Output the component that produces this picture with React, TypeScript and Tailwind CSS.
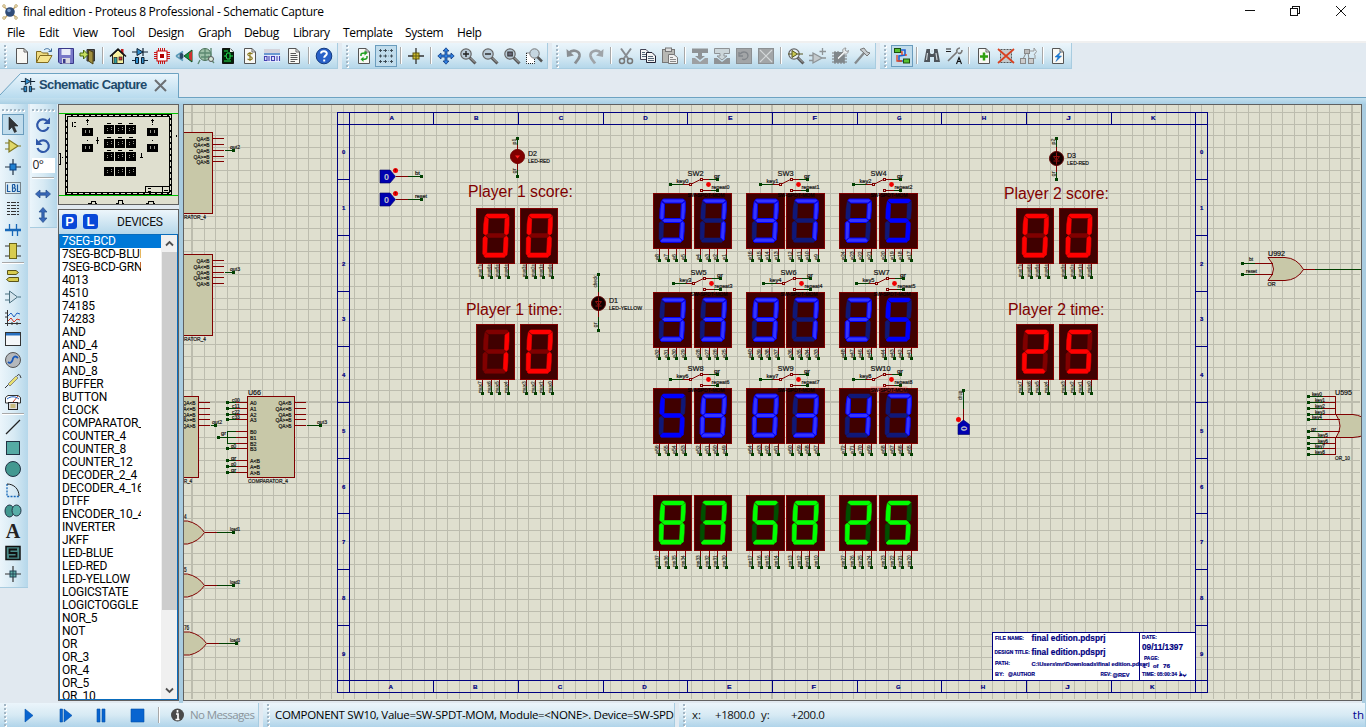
import React from 'react';

type Kids = { children?: React.ReactNode };

/* ---------- icons ---------- */

const Ic = ({ children, active, tall }: Kids & { active?: boolean; tall?: boolean }) => (
  <span
    className={
      (tall ? 'h-[21px] ' : 'h-[22px] ') +
      'flex w-[22px] shrink-0 items-center justify-center ' +
      (active ? 'border border-[#6a9cbd] bg-[#c0dcec]' : '')
    }
  >
    <svg width="18" height="18" viewBox="0 0 18 18" className="shrink-0" fill="none">
      {children}
    </svg>
  </span>
);

const Sheet = ({ children }: Kids) => (
  <>
    <path d="M3.5 1.5H11L14.5 5V16.5H3.5Z" fill="#f8f8f4" stroke="#555" />
    <path d="M11 1.5V5H14.5" stroke="#666" />
    {children}
  </>
);

const Lens = ({ children, light }: Kids & { light?: boolean }) => (
  <>
    <path d="M10.5 10.5L16.5 16.5" stroke="#555" strokeWidth="3" />
    <path d="M11.5 11L16 15.5" stroke="#b4b4b4" strokeWidth="1" />
    <circle cx="7" cy="7" r="5.2" fill={light ? '#e8f0f4' : '#b9cbd8'} stroke="#666" strokeWidth="1.2" />
    {children}
  </>
);

const Parts = () => (
  <>
    <path d="M1 5H17M12 1V9M1 13.500H5M13 13.500H17" stroke="#123" strokeWidth="1.2" />
    <path d="M6 1.500L12 5L6 8.500Z" fill="#3090d0" stroke="#123" />
    <path d="M4.500 10.500H7.500V16.500H4.500ZM10.500 10.500H13V16.500H10.500Z" fill="#3090d0" stroke="#123" />
  </>
);

const Block = ({ children }: Kids) => (
  <>
    <rect x="1" y="1" width="16" height="16" fill="#a2a5a7" />
    <rect x="1.5" y="1.5" width="15" height="15" stroke="#8c9093" />
    {children}
  </>
);

const mainIcons: Record<string, React.ReactNode> = {
  blank: <Sheet />,
  open: (
    <>
      <path d="M1.5 15.5V4.500H6L7.500 6H13V8" fill="#f0dc80" stroke="#806a20" />
      <path d="M1.5 15.500L5 8.500H17L13 15.500Z" fill="#f6e48c" stroke="#806a20" />
      <path d="M9 3C11 1 14 1 15.500 4M16.500 1.500V4.500H13.500" stroke="#3a6a9a" />
    </>
  ),
  save: (
    <>
      <path d="M1.500 1.500H16.500V16.500H3L1.500 15Z" fill="#7878c8" stroke="#38388a" />
      <rect x="4.500" y="2" width="9" height="6" fill="#e8ecf8" />
      <rect x="5" y="11" width="8" height="5.500" fill="#d8d8e0" />
      <rect x="6" y="12" width="2.500" height="4" fill="#38388a" />
    </>
  ),
  exit: (
    <>
      <path d="M8 2.500H15.500V14H8Z" fill="#555" stroke="#333" />
      <path d="M9.500 3L14 5V17L9.500 14Z" fill="#a09040" stroke="#4a4010" />
      <path d="M1 6H4.500V3L9 7.500L4.500 12V9H1Z" fill="#c8e060" stroke="#4a6a10" />
    </>
  ),
  home: (
    <>
      <rect x="12" y="2" width="2.500" height="6" fill="#c02020" />
      <path d="M3.500 8V16.500H14.500V8L9 3Z" fill="#f8f0a0" stroke="#222" />
      <path d="M1 9.500L9 2L17 9.500" stroke="#111" strokeWidth="1.500" />
      <rect x="5" y="10.500" width="3" height="6" fill="#30a0a0" stroke="#222" strokeWidth=".7" />
      <rect x="10" y="10" width="3" height="3" fill="#e03030" stroke="#222" strokeWidth=".7" />
    </>
  ),
  parts: <Parts />,
  chip: (
    <>
      <path d="M5.500 1V17M7.500 1V17M9.500 1V17M11.500 1V17M1 5.500H17M1 7.500H17M1 9.500H17M1 11.500H17" stroke="#c80000" strokeWidth=".9" />
      <rect x="4" y="4" width="10" height="10" fill="#fff" stroke="#c80000" />
      <rect x="7" y="7" width="4" height="4" fill="#b00000" />
    </>
  ),
  view3d: (
    <>
      <path d="M9 9L17 3V15Z" fill="#189040" stroke="#105020" />
      <path d="M14 6.500L17 4V14L14 11.500Z" fill="#d03030" />
      <path d="M1 9L8 4.500M1 9L8 13.500" stroke="#5a9ab8" strokeWidth="1.500" />
      <ellipse cx="6.500" cy="9" rx="2" ry="3" fill="#284868" />
    </>
  ),
  gerber: (
    <>
      <circle cx="8" cy="7.500" r="6" fill="#9dc0a8" stroke="#4a7058" />
      <path d="M2 6H14M4 10H13M8 2V13M3 13L1 17M11 9L17 16M14 1V9" stroke="#5b8870" strokeWidth="1.300" />
      <circle cx="14" cy="12" r="2.500" fill="#d6e8d8" stroke="#555" />
    </>
  ),
  design: (
    <>
      <path d="M3.500 1.500H11L14.500 5V16.500H3.500Z" fill="#042008" stroke="#111" />
      <path d="M5 9H7L8 6H11V12H8L7 9M11 9H14M5 4H9M5 14H12" stroke="#20e050" />
      <path d="M11 1.500V5H14.500Z" fill="#eee" />
    </>
  ),
  bill: (
    <Sheet>
      <path d="M11.500 7C10 5.500 6.500 5.800 6.800 7.700C7 9.500 11.300 9 11.300 11.300C11.200 13 8 13.300 6.500 11.800M9 5V14" stroke="#8a7a20" strokeWidth="1.200" />
    </Sheet>
  ),
  bits: (
    <>
      <rect x="1" y="2" width="16" height="4" fill="#d4d4dc" />
      <rect x="1" y="6" width="16" height="2" fill="#6a98d0" />
      <rect x="1" y="8" width="16" height="7" fill="#e8ecff" />
      <g stroke="#4040b0" strokeWidth="1.100">
        <rect x="1.500" y="9.500" width="2.500" height="4" />
        <path d="M6 9V14M14 9V14M16.500 9V14" />
        <rect x="8.500" y="9.500" width="3" height="4" />
      </g>
    </>
  ),
  text: (
    <Sheet>
      <path d="M5.500 6.500H11M5.500 8.500H12.500M5.500 10.500H12.500M5.500 12.500H12.500M5.500 14.500H10" stroke="#555" />
    </Sheet>
  ),
  help: (
    <>
      <circle cx="9" cy="9" r="7.800" fill="#2860c8" stroke="#123a80" />
      <path d="M6 6.500C6.200 3.200 12.200 3.500 11.800 6.800C11.500 8.800 9.200 8.600 9.200 10.800M9.200 12.500V14.500" stroke="#fff" strokeWidth="2" />
    </>
  ),
  refresh: (
    <Sheet>
      <path d="M6 9V7.500C6 6 8 6 10 6M12 9V10.500C12 12 10 12.300 8 12.300" stroke="#20a020" strokeWidth="1.500" />
      <path d="M9.500 3.500L12.500 6L9.500 8.500ZM8.500 9.800L5.500 12.300L8.500 15Z" fill="#20a020" />
    </Sheet>
  ),
  grid: (
    <path
      d="M3.500 2V5M8.500 2V5M14.500 2V5M3.500 7.500V10.500M8.500 7.500V10.500M14.500 7.500V10.500M3.500 13V16M8.500 13V16M14.500 13V16M2 3.500H5M7 3.500H10M13 3.500H16M2 9H5M7 9H10M13 9H16M2 14.500H5M7 14.500H10M13 14.500H16M6 3.500H6.700M11.500 3.500H12M6 9H6.700M11.500 9H12M6 14.500H6.700M11.500 14.500H12"
      stroke="#34424c"
      strokeWidth=".9"
    />
  ),
  origin: (
    <>
      <path d="M9 1V17M1 9H17" stroke="#333" strokeWidth="1.300" />
      <rect x="6" y="6" width="6" height="6" fill="#d0c030" stroke="#605810" />
      <path d="M9 5V13M5 9H13" stroke="#605810" />
    </>
  ),
  pan: (
    <path
      d="M9 .8L12 4H10V8H14V6L17.200 9L14 12V10H10V14H12L9 17.200L6 14H8V10H4V12L.8 9L4 6V8H8V4H6Z"
      fill="#3080e0"
      stroke="#103a80"
      strokeWidth=".8"
    />
  ),
  zoomIn: <Lens><path d="M4 7H10M7 4V10" stroke="#222" strokeWidth="1.400" /></Lens>,
  zoomOut: <Lens><path d="M4 7H10" stroke="#222" strokeWidth="1.400" /></Lens>,
  zoomAll: <Lens><rect x="4.800" y="5" width="4.500" height="4" fill="#667" stroke="#333" /></Lens>,
  zoomArea: (
    <>
      <rect x="1.500" y="6" width="8" height="10.500" fill="#fff" stroke="#222" strokeDasharray="1 1" />
      <path d="M12 9.500L17 14.500" stroke="#555" strokeWidth="2.500" />
      <circle cx="9.500" cy="6.500" r="4.700" fill="#c6d6e0" stroke="#777" />
    </>
  ),
  undo: (
    <>
      <path d="M3.500 6.500C8 1.500 15 4 14.500 9C14 12.500 11.500 14 10 16.500" stroke="#898e92" strokeWidth="2.700" />
      <path d="M1.500 2L2 10L9 8.500Z" fill="#898e92" />
    </>
  ),
  redo: (
    <>
      <path d="M14.500 6.500C10 1.500 3 4 3.500 9C4 12.500 6.500 14 8 16.500" stroke="#9fa4a8" strokeWidth="2.700" />
      <path d="M16.500 2L16 10L9 8.500Z" fill="#9fa4a8" />
    </>
  ),
  cut: (
    <>
      <path d="M4 1.500L11.500 12M14 1.500L6.500 12" stroke="#888c90" strokeWidth="2" />
      <circle cx="5" cy="14" r="2.500" stroke="#777" strokeWidth="1.500" />
      <circle cx="13" cy="14" r="2.500" stroke="#777" strokeWidth="1.500" />
    </>
  ),
  copy: (
    <>
      <path d="M1.500 2.500H7L9.500 5V12.500H1.500Z" fill="#f4f4f4" stroke="#445" />
      <path d="M7.500 5.500H13L16.500 9V15.500H7.500Z" fill="#f4f4f4" stroke="#223" />
      <path d="M3 5.500H6M3 7.500H7M3 9.500H7M9 9.500H14M9 11.500H15M9 13.500H15" stroke="#567" />
    </>
  ),
  paste: (
    <>
      <rect x="1.500" y="2.500" width="12" height="13" fill="#b8b8b4" stroke="#777" />
      <rect x="4.500" y="1" width="6" height="3.500" fill="#ddd" stroke="#777" />
      <path d="M7.500 7.500H13L16.500 10.500V16.500H7.500Z" fill="#f0f0f0" stroke="#777" />
      <path d="M9 10.500H12M9 12.500H15M9 14.500H15" stroke="#888" />
    </>
  ),
  blkCopy: (
    <>
      <path d="M1 1.500H17V6H11V9H14L9 13L4 9H7V6H1Z" fill="#8f9396" />
      <path d="M1 11H4L9 15L14 11H17V17H1Z" fill="#9da0a3" />
    </>
  ),
  blkMove: (
    <>
      <path d="M1.500 1.500H16.500V6.500H11V9H14L9 13L4 9H7V6.500H1.500Z" fill="#ccd6da" stroke="#8f9396" />
      <path d="M1 11H4L9 15L14 11H17V17H1Z" fill="#8f9396" />
    </>
  ),
  blkRot: <Block><path d="M5 7C8 3.500 13 5 13 9C12.500 12.500 9 13 7 12M4 5V9H8" stroke="#80858a" strokeWidth="1.300" /></Block>,
  blkDel: <Block><path d="M3 3L15 15M15 3L3 15" stroke="#d4d8da" strokeWidth="1.200" /></Block>,
  pick: (
    <>
      <Lens light />
      <path d="M5 3.500V10.500L10.500 7ZM1 7H5M10.500 7H16" fill="#c8c850" stroke="#555520" />
    </>
  ),
  make: <path d="M4 6V16L13 11ZM0 8.500H4M0 13.500H4M13 11H17M13.500 1V8M10.500 4.500H17" fill="#c4cacd" stroke="#8e9497" strokeWidth="1.300" />,
  pack: (
    <>
      <path d="M4 4V17M7 4V17M10 6V17M13 8V17M1 6H10M1 9H16M1 12H16M1 15H16" stroke="#777" />
      <rect x="3" y="5" width="10.500" height="10.500" fill="#80878b" />
      <path d="M6 11L12 5C11 2 13 1 15 1L14 3L16 4.500L17.500 3.500C17 7 15 7.500 13.500 7L7.500 12.500Z" fill="#e8ecee" stroke="#777" strokeWidth=".7" />
    </>
  ),
  hammer: (
    <>
      <path d="M11 6L2 16.500" stroke="#858a8d" strokeWidth="2.300" />
      <path d="M7 2.500L11 1L14 5L17 6L14 9L10 5Z" fill="#c8cdd0" stroke="#777" />
    </>
  ),
  wire: (
    <>
      <path d="M7 3H12V8L6 9V14H11" stroke="#2060d0" strokeWidth="1.600" />
      <path d="M7 5H9V8M13 9V7M4 8V14H9" stroke="#e04020" strokeWidth="1.300" />
      <rect x="1.500" y="1.500" width="6" height="4" fill="#58c030" stroke="#1a5010" />
      <rect x="10.500" y="12" width="6" height="4" fill="#58c030" stroke="#1a5010" />
    </>
  ),
  find: (
    <>
      <path d="M3.500 2H7V6L8 7H10L11 6V2H14.500L17 15H11V10H7V15H1Z" fill="#4e545a" />
      <path d="M4.500 6L3.500 13M13 6L14 13M8 4H10" stroke="#cdd4d8" strokeWidth="1.200" />
    </>
  ),
  assign: (
    <>
      <path d="M1 2H6M1 4.500H6" stroke="#222" />
      <path d="M3 14L12 5C11 3 13 1 15 1M17 3C17 6 15 7 13 6" stroke="#777" strokeWidth="1.600" />
      <path d="M11.500 17L14 10.500L16.500 17M12.500 14.500H15.500" stroke="#111" strokeWidth="1.100" />
    </>
  ),
  addSheet: <Sheet><path d="M9 5.500V13.500M5 9.500H13" stroke="#30a010" strokeWidth="2.500" /></Sheet>,
  delSheet: (
    <>
      <rect x="3.500" y="2.500" width="11" height="13" fill="#c4cacc" stroke="#555" strokeDasharray="2 1" />
      <path d="M1 2L17 16M17 2L1 16" stroke="#d84020" strokeWidth="1.700" />
    </>
  ),
  hier: (
    <>
      <path d="M7 6L4 12M9 6L10 12" stroke="#888" />
      <rect x="5.500" y="2.500" width="5" height="4" fill="#bbb" stroke="#888" />
      <rect x="1.500" y="11.500" width="5" height="5" fill="#ccc" stroke="#888" />
      <rect x="9.500" y="11.500" width="5" height="5" fill="#ccc" stroke="#888" />
      <path d="M11 4H15V1L17.500 4.500L15 8M16 8V12" stroke="#999" />
    </>
  ),
  erc: <Sheet><path d="M11.500 5L6 10H9L7 14.500L12.500 9H9.500Z" fill="#1880e0" stroke="#1060b0" strokeWidth=".5" /></Sheet>,
};

const bars: { w: string; items: string[] }[] = [
  { w: 'w-[338px]', items: ['blank', 'open', 'save', 'exit', '|', 'home', 'parts', 'chip', 'view3d', 'gerber', 'design', 'bill', 'bits', 'text', '|', 'help'] },
  { w: 'w-[206px]', items: ['refresh', '*grid', '|', 'origin', '|', 'pan', 'zoomIn', 'zoomOut', 'zoomAll', 'zoomArea'] },
  { w: 'w-[324px]', items: ['undo', 'redo', '|', 'cut', 'copy', 'paste', '|', 'blkCopy', 'blkMove', 'blkRot', 'blkDel', '|', 'pick', 'make', 'pack', 'hammer'] },
  { w: 'w-[192px]', items: ['*wire', '|', 'find', 'assign', '|', 'addSheet', 'delSheet', 'hier', '|', 'erc'] },
];

const Grip = () => (
  <span className="flex h-full w-[11px] shrink-0 flex-col items-center justify-center gap-[2px] pr-px">
    {Array.from({ length: 6 }, (_, i) => (
      <span key={i} className="h-[2px] w-[2px] bg-[#a3b6c4] shadow-[1px_1px_0_#fff]" />
    ))}
  </span>
);

const VSep = () => (
  <span className="flex w-[8px] shrink-0 justify-center">
    <span className="h-[17px] w-[2px] border-r border-white bg-[#a8a8a8]" />
  </span>
);

const MainBars = () => (
  <div className="flex h-[31px] gap-[4px] border-t-2 border-[#f0f0f0] bg-[#e2eaf1]">
    {bars.map((b, i) => (
      <div key={i} className={b.w + ' flex h-[26px] items-center border-b border-r border-[#a8cce0] bg-linear-to-b from-[#ebf5fb] via-[#d7eaf4] to-[#b5d7ea]'}>
        <Grip />
        {b.items.map((n, j) =>
          n === '|' ? <VSep key={j} /> : <Ic key={j} active={n[0] === '*'}>{mainIcons[n.replace('*', '')]}</Ic>
        )}
      </div>
    ))}
  </div>
);

/* ---------- side tools ---------- */

const side: React.ReactNode[] = [
  <path d="M5 1L14 10H10L12.500 15.500L10.500 16.500L8 11L5 14Z" fill="#303438" stroke="#222" strokeWidth=".6" />,
  <path d="M5 3V15L14 9ZM1 6H5M1 12H5M14 9H17" fill="#e0d868" stroke="#807820" strokeWidth="1.200" />,
  <>
    <path d="M9 1V17M1 9H17" stroke="#234" strokeWidth="1.200" />
    <rect x="6" y="6" width="6" height="6" fill="#2080d0" stroke="#0a4080" />
  </>,
  <>
    <rect x="1.500" y="3.500" width="15" height="11" stroke="#222" strokeDasharray="1 1" />
    <path d="M3.500 5.500V12.500H6.500M8.500 5.500V12.500H10.500L11.500 11V10L10.500 9H8.500M8.500 5.500H10.500L11 7.500L10.500 9M13.500 5.500V12.500H16" stroke="#1858a0" strokeWidth="1.200" />
  </>,
  <path d="M3 2.500H15M3 5.500H15M3 8.500H15M3 11.500H15M3 14.500H15" stroke="#333" strokeDasharray="3 1 5 1" />,
  <>
    <path d="M1 9H17" stroke="#1868b8" strokeWidth="2.500" />
    <path d="M5.500 3V9M12.500 3V9M8.500 9V15M13.500 9V15" stroke="#1868b8" strokeWidth="1.300" />
  </>,
  <>
    <path d="M1 4H17M1 14H17" stroke="#333" />
    <rect x="5.500" y="1.500" width="7" height="15" fill="#d8cc50" stroke="#6a6418" />
  </>,
  null,
  <path d="M3.500 3.500H12L14.500 5.500L12 7.500H3.500ZM14.500 10.500H5L2.500 12.500L5 14.500H14.500Z" fill="#d8cc50" stroke="#5a5418" />,
  <path d="M5.500 3V15L13.500 9ZM1 6H5M1 12H5M14 9H17" fill="#d4e4ec" stroke="#4a7080" />,
  <>
    <path d="M3.500 1V17M1 14.500H17M1 4H4M1 8H4M8 13V16M13 13V16" stroke="#333" />
    <path d="M4 7L7 4L10 8L13 4L16 5" stroke="#2060c0" />
    <path d="M4 12L7 9L10 13L13 10L16 11" stroke="#d03020" />
  </>,
  <>
    <rect x="1.500" y="2.500" width="15" height="13" fill="#f4f6f8" stroke="#333" />
    <rect x="2" y="3" width="14" height="2.500" fill="#2870c0" />
  </>,
  <>
    <circle cx="9" cy="9" r="7.500" fill="#b4b8bc" stroke="#555" />
    <path d="M4 11C6 13 8 11 8.500 9C9 6 11 4 14 7" stroke="#1858b8" strokeWidth="1.800" />
  </>,
  <>
    <path d="M1 16L5 12M13 4C15 1 16 3 17 6" stroke="#333" />
    <path d="M4 12L12 4L14 6L6 14Z" fill="#e8e070" stroke="#777" strokeWidth=".8" />
  </>,
  <>
    <path d="M1.500 10V4.500L4 2.500H14L16.500 4.500V10Z" fill="#fff" stroke="#333" />
    <path d="M9 9L14 3" stroke="#c04030" />
    <path d="M3 6C7 3 11 3 15 6" stroke="#2060c0" />
    <rect x="4.500" y="9.500" width="9" height="7" fill="#ddd" stroke="#222" />
    <path d="M6.500 12H11.500M6.500 14H11.500" stroke="#b09820" strokeWidth="1.200" />
  </>,
  null,
  <path d="M2 16L16 2" stroke="#222" strokeWidth="1.300" />,
  <rect x="2.500" y="2.500" width="13" height="13" fill="#55aaa4" stroke="#234" />,
  <circle cx="9" cy="9" r="7.500" fill="#429890" stroke="#234" />,
  <>
    <path d="M3 3V15.500H15" stroke="#1868b8" strokeWidth="1.300" strokeDasharray="2 1.200" />
    <path d="M3 3C10 3 15 8 15 15" stroke="#222" />
  </>,
  <>
    <ellipse cx="5.500" cy="9" rx="4.500" ry="6" fill="#429890" stroke="#234" />
    <ellipse cx="12.500" cy="8.500" rx="4.500" ry="5.500" fill="#58aea8" stroke="#234" />
  </>,
  'A',
  <>
    <rect x="2" y="2.500" width="14" height="13" fill="#4a8a88" stroke="#111" strokeWidth="1.500" />
    <path d="M13 5.500H5.500V9H12.500V12.500H5" stroke="#111" strokeWidth="1.800" />
  </>,
  <>
    <path d="M9 1V17M1 9H17" stroke="#333" strokeWidth="1.200" />
    <rect x="6" y="6" width="6" height="6" fill="#60b0a8" stroke="#245" />
    <path d="M9 6V12M6 9H12" stroke="#245" />
  </>,
];

const HGrip = () => (
  <span className="flex h-[8px] w-full shrink-0 items-center justify-center gap-[2px]">
    {Array.from({ length: 6 }, (_, i) => (
      <span key={i} className="h-[2px] w-[2px] bg-[#a3b6c4] shadow-[1px_1px_0_#fff]" />
    ))}
  </span>
);

const HSep = () => (
  <span className="flex h-[4px] w-full shrink-0 items-center justify-center">
    <span className="h-[2px] w-[22px] border-b border-white bg-[#a8a8a8]" />
  </span>
);

const sideBg = 'flex flex-col items-center border-b border-[#a8cce0] bg-linear-to-r from-[#ebf5fb] via-[#d7eaf4] to-[#b5d7ea] ';

const SideTools = () => (
  <div className={sideBg + 'h-[484px] w-[28px] pt-[2px] pr-[2px]'}>
    <HGrip />
    {side.map((s, i) =>
      s === null ? (
        <HSep key={i} />
      ) : s === 'A' ? (
        <span key={i} className="flex h-[21px] w-[22px] items-center justify-center font-['Liberation_Serif',serif] text-[20px] leading-[21px] font-bold text-[#222]">A</span>
      ) : (
        <Ic key={i} tall active={i === 0}>{s}</Ic>
      )
    )}
  </div>
);

const RotateTools = () => (
  <div className={sideBg + 'h-[124px] w-[27px] pt-[2px] pr-px'}>
    <HGrip />
    <Ic tall>
      <path d="M13 5A5.800 5.800 0 1 0 14.500 11" stroke="#3058a8" strokeWidth="2.200" />
      <path d="M16 1.500V8H9.500Z" fill="#3058a8" />
    </Ic>
    <Ic tall>
      <path d="M5 5A5.800 5.800 0 1 1 3.500 11" stroke="#3058a8" strokeWidth="2.200" />
      <path d="M2 1.500V8H8.500Z" fill="#3058a8" />
    </Ic>
    <span className="mt-[2px] h-[15px] w-[23px] shrink-0 bg-white pl-px font-['Open_Sans',sans-serif] text-[12px] leading-[14px] tracking-[-0.5px] text-[#222]">0°</span>
    <span className="flex h-[10px] shrink-0 items-center">
      <span className="h-[2px] w-[22px] border-b border-white bg-[#a8a8a8]" />
    </span>
    <Ic tall>
      <path d="M1.500 9L6 5V7.800H12V5L16.500 9L12 13V10.200H6V13Z" fill="#3868b8" stroke="#234a88" strokeWidth=".7" />
    </Ic>
    <Ic tall>
      <path d="M9 1.500L13 6H10.200V12H13L9 16.500L5 12H7.800V6H5Z" fill="#3868b8" stroke="#234a88" strokeWidth=".7" />
    </Ic>
  </div>
);

/* ---------- overview and device list ---------- */

const Overview = () => (
  <div className="h-[101px] w-[121px] shrink-0 border border-[#606060] bg-[#dfdfcf]">
    <svg width="119" height="99" viewBox="59 105 119 99" shapeRendering="crispEdges" fill="none">
      <path d="M59 113.500H178M59 195.500H178" stroke="#00c000" />
      <rect x="66.500" y="115.500" width="104" height="78" stroke="#000" strokeWidth="3" />
      <rect x="66.500" y="115.500" width="104" height="78" stroke="#dfdfcf" strokeDasharray="4 2" />
      {[[104, 125], [104, 139], [104, 152], [104, 167]].map(([x, y]) =>
        [0, 11, 22].map((d) => (
          <g key={y + '-' + d}>
            <rect x={x + d} y={y} width="10" height="9" fill="#000" />
            {y < 160 && <path d={`M${x + d + 3} ${y - 1.500}h4`} stroke="#000" />}
            <path d={`M${x + d + 3.500} ${y + 3}v3M${x + d + 7.500} ${y + 2}v3`} stroke="#9a9a90" strokeDasharray="1 1" />
          </g>
        ))
      )}
      {[[82, 128], [82, 144], [147, 128], [147, 144]].map(([x, y]) => (
        <g key={x + '-' + y}>
          <rect x={x} y={y} width="11" height="8" fill="#000" />
          <path d={`M${x + 3.500} ${y + 2}v3M${x + 7.500} ${y + 2}v3`} stroke="#9a9a90" />
          <path d={`M${x + 5.500} ${y - 4}v1`} stroke="#000" />
        </g>
      ))}
      <path d="M87.500 119V123M86 120.500H89M152.500 119V123M151 120.500H154M97.500 137V144M96 140.500H99M141.500 153V158M140 157.500H143M72 122V127M74 122.500H76M74 126.500H76M62 157.500H63M176.500 135V137" stroke="#000" />
      <rect x="145.500" y="186.500" width="24" height="6" stroke="#000" />
      <path d="M162.500 186V193M148 188.500H151M148 191.500H151M164 190.500H168" stroke="#000" />
      <path d="M88 203.500H91.500V201.500H95.500V203.500H97M116 203.500H118.500V200.500H122.500V203.500H124M146 203.500H148.500V201.500H153.500V203.500H155" stroke="#000" />
      <path d="M59 153.500H60.500V164.500H59" stroke="#000" />
    </svg>
  </div>
);

const devices = [
  '7SEG-BCD', '7SEG-BCD-BLUE', '7SEG-BCD-GRN', '4013', '4510', '74185', '74283', 'AND', 'AND_4', 'AND_5', 'AND_8',
  'BUFFER', 'BUTTON', 'CLOCK', 'COMPARATOR_4', 'COUNTER_4', 'COUNTER_8', 'COUNTER_12', 'DECODER_2_4', 'DECODER_4_16',
  'DTFF', 'ENCODER_10_4', 'INVERTER', 'JKFF', 'LED-BLUE', 'LED-RED', 'LED-YELLOW', 'LOGICSTATE', 'LOGICTOGGLE',
  'NOR_5', 'NOT', 'OR', 'OR_3', 'OR_4', 'OR_5', 'OR_10',
];

const Chevron = ({ down }: { down?: boolean }) => (
  <svg width="15" height="17" viewBox="0 0 15 17" fill="none" className="shrink-0">
    <path d={down ? 'M4 6.500L7.500 10L11 6.500' : 'M4 10.500L7.500 7L11 10.500'} stroke="#505050" strokeWidth="1.800" />
  </svg>
);

const Key = ({ children }: Kids) => (
  <span className="flex h-[15px] w-[15px] items-center justify-center rounded-[3px] bg-[#0848d8] text-[13px] leading-none font-bold text-white">{children}</span>
);

const DevicePanel = () => (
  <div className="flex h-[492px] w-[121px] flex-col border border-[#606060]">
    <div className="flex h-[24px] shrink-0 items-center gap-[6px] bg-linear-to-b from-[#edf6fb] to-[#b5d7ea] pb-px pl-[3px]">
      <Key>P</Key>
      <Key>L</Key>
      <span className="ml-[13px] font-['Roboto',sans-serif] text-[12px] tracking-[-0.25px] text-[#111]">DEVICES</span>
    </div>
    <div className="flex min-h-0 grow border border-[#0a6cbc] bg-white">
      <div className="w-[101px] overflow-hidden">
        {devices.map((d, i) => (
          <div key={d} className={'h-[13px] pl-[2px] ' + (i === 0 ? 'bg-[#0078d7] text-white' : 'text-black')}>
            <div className="w-[79px] overflow-hidden font-['Roboto',sans-serif] text-[12px] leading-[13px] tracking-[-0.2px] whitespace-nowrap">{d}</div>
          </div>
        ))}
      </div>
      <div className="flex w-[16px] flex-col items-center bg-[#f0f0f0]">
        <Chevron />
        <div className="h-[358px] w-[15px] shrink-0 bg-[#cdcdcd]" />
        <div className="grow" />
        <Chevron down />
      </div>
    </div>
  </div>
);

/* ---------- schematic ---------- */

const RED = '#800000';
const GRN = '#004000';
const NAVY = '#000080';
const BODY = '#c8c8a8';

const T = ({ x, y, s = 6, w, fill = '#111', b, up, end, children }: Kids & {
  x: number; y: number; s?: number; w?: number; fill?: string; b?: boolean; up?: boolean; end?: boolean;
}) => (
  <text
    x={x}
    y={y}
    fontSize={s}
    fill={fill}
    stroke={s < 9 ? fill : 'none'}
    strokeWidth={s < 9 ? 0.2 : 0}
    fontWeight={b ? 700 : 400}
    textAnchor={end ? 'end' : 'start'}
    textLength={w}
    lengthAdjust="spacingAndGlyphs"
    transform={up ? `rotate(-90 ${x} ${y})` : undefined}
  >
    {children}
  </text>
);

const L = ({ d, c = RED }: { d: string; c?: string }) => <path d={d} stroke={c} fill="none" shapeRendering="crispEdges" />;
const Dot = ({ x, y }: { x: number; y: number }) => <rect x={x - 1.5} y={y - 1.5} width="3" height="3" fill={GRN} shapeRendering="crispEdges" />;

const segs: Record<string, string> = {
  a: 'M11 6H31L32.500 7.500L30 10H12.500L9.500 7.500Z',
  b: 'M33 8.300V17L32.300 25.500L30.500 27L28.500 25.500L29 11Z',
  c: 'M30.500 28L32 30L31.800 38L31 47L29.800 47.500L27.300 44.500L28 30Z',
  d: 'M10.500 45H27.500L29.700 47.500L28.500 49.300H9L7.800 48Z',
  e: 'M9 28L11.300 30L10.800 44.500L8 47.300L6.800 46L7 30Z',
  f: 'M9 8.300L12.300 11L11.700 25.500L9.500 27L7.500 25.500L7.800 16Z',
  g: 'M9.700 27.500L12 25.500H28L30.300 27.500L28 29.500H12Z',
};
const on: Record<string, string> = {
  '0': 'abcdef', '1': 'bc', '2': 'abged', '3': 'abgcd', '4': 'fgbc', '5': 'afgcd', '7': 'abc', '8': 'abcdefg', '9': 'abcdfg',
};

type Tone = 'red' | 'blue' | 'plain' | 'green';
const tones: Record<Tone, [string, string, string]> = {
  red: ['#ff0000', '#ff0000', '#800000'],
  blue: ['#3434ff', '#0000ff', '#101878'],
  plain: ['#0000ff', '#0000ff', '#101878'],
  green: ['#00ff00', '#00ff00', '#005000'],
};

const Seg = ({ x, y, w, v, tone, pin, labels }: { x: number; y: number; w: number; v: string; tone: Tone; pin: number; labels: string[] }) => {
  const [fill, stroke, off] = tones[tone];
  const shift = tone === 'red' ? (w < 39 ? 0.6 : 0) : 0.7;
  const order = [...'abcdefg'].sort((p, q) => Number(on[v].includes(p)) - Number(on[v].includes(q)));
  return (
    <g>
      <rect x={x + 0.5} y={y + 0.5} width={w - 1} height="55" fill="#400000" stroke={RED} shapeRendering="crispEdges" />
      <g transform={`translate(${x - shift} ${y})`}>
        {order.map((k) => {
          const lit = on[v].includes(k);
          return <path key={k} d={segs[k]} fill={lit ? fill : off} stroke={lit ? stroke : off} strokeWidth={lit ? (tone === 'blue' ? 1 : 0.6) : 0.5} />;
        })}
      </g>
      {[6.5, 15.5, 23.5, 32.5].map((o, i) => (
        <g key={o}>
          <L d={`M${x + o} ${y + 56}v7`} />
          <L d={`M${x + o} ${y + 62}V${y + 56 + pin}`} c={GRN} />
          <Dot x={x + o} y={y + 56 + pin} />
          <T x={x + o - 1} y={y + 56 + pin - 0.5} s={5.5} w={Math.min(pin - 1, labels[i].length * 2.9)} fill="#3a3a30" up>{labels[i]}</T>
        </g>
      ))}
    </g>
  );
};

const names = (p: string, top: number, suf = '') => [0, 1, 2, 3].map((i) => p + (top - i) + suf);

const cols: [number, number, number, number][] = [[653, 39, 694, 38], [746, 39, 786, 39], [839, 38, 879, 39]];

const Displays = () => (
  <g>
    {[[476, 208, '00', 's', 520], [476, 324, '10', '', 520], [1016, 208, '00', 's', 1059], [1016, 324, '25', '', 1059]].map((r) => {
      const [x, y, v, s, x2] = r as [number, number, string, string, number];
      return (
        <g key={x + '-' + y}>
          <Seg x={x} y={y} w={x === 476 ? 39 : 38} v={v[0]} tone="red" pin={13.5} labels={names('mux', 7, s)} />
          <Seg x={x2} y={y} w={x === 476 ? 38 : 39} v={v[1]} tone="red" pin={13.5} labels={names('mux', 3, s)} />
        </g>
      );
    })}
    {([[193, ['97', '97', '25'], 11.5], [292, ['33', '97', '25'], 10.5], [388, ['58', '83', '47'], 10.5]] as [number, string[], number][]).map(([y, vs, pin], r) =>
      cols.map(([x, w, x2, w2], c) => {
        const n = (r * 3 + c + 1) * 8;
        return (
          <g key={y + '-' + c}>
            <Seg x={x} y={y} w={w} v={vs[c][0]} tone={r === 2 && c === 0 ? 'plain' : 'blue'} pin={pin} labels={names('e', n)} />
            <Seg x={x2} y={y} w={w2} v={vs[c][1]} tone={r < 2 && c === 2 ? 'plain' : 'blue'} pin={pin} labels={names('e', n - 4)} />
          </g>
        );
      })
    )}
    {['83', '58', '25'].map((v, c) => {
      const [x, w, x2, w2] = cols[c];
      const n = [37, 17, 27][c];
      return (
        <g key={v}>
          <Seg x={x} y={495} w={w} v={v[0]} tone="green" pin={16.5} labels={names('mn', n)} />
          <Seg x={x2} y={495} w={w2} v={v[1]} tone="green" pin={16.5} labels={names('mn', n - 4)} />
        </g>
      );
    })}
  </g>
);

const Switch = ({ x, y, n }: { x: number; y: number; n: number }) => (
  <g>
    <L d={`M${x - 20} ${y}h12`} c={GRN} />
    <L d={`M${x - 8} ${y}h7`} />
    <path d={`M${x + 1} ${y - 0.5}L${x + 10} ${y - 5}`} stroke={RED} />
    <L d={`M${x + 12} ${y - 5}h6M${x + 12} ${y + 6}h8`} />
    <L d={`M${x + 18} ${y - 5}h9M${x + 20} ${y + 6}h7`} c={GRN} />
    {[[0, 0], [11, -5], [11, 6]].map(([a, b]) => (
      <rect key={b} x={x + a - 1} y={y + b - 1} width="2" height="2" fill="#dfdfcf" stroke={RED} />
    ))}
    <Dot x={x - 20} y={y} />
    <Dot x={x + 27} y={y - 5} />
    <Dot x={x + 27} y={y + 6} />
    <circle cx={x + 18} cy={y} r="2.400" fill="#f00000" />
    <T x={x - 3} y={y - 8.700} s={7.500} w={n === 8 ? 20 : 16}>{'SW' + (n + 2)}</T>
    <T x={x - 14} y={y - 1.500} s={5.800} w={12}>{'key' + n}</T>
    <T x={x + 23.500} y={y - 6.800} s={5.500} w={6}>gr</T>
    <T x={x + 21} y={y + 4.5} s={5.800} w={18}>{'repeat' + n}</T>
    {n === 8 && <rect x={x - 3} y={y + 7} width="37" height="6" fill="#ff4040" opacity=".35" />}
    <T x={x - 3} y={y + 12.500} s={5.800} w={37} fill="#000">SW-SPDT-MOM</T>
  </g>
);

const Led = ({ x, y, top, bot, id, kind, w, lit, net }: { x: number; y: number; top: number; bot: number; id: string; kind: string; w: number; lit?: boolean; net: string }) => (
  <g>
    <L d={`M${x} ${top}V${y - 11}M${x} ${y + 13}V${bot}`} c={GRN} />
    <L d={`M${x} ${y - 12}V${y + 13}`} />
    <Dot x={x} y={top} />
    <Dot x={x} y={bot} />
    <circle cx={x} cy={y} r="7" fill={lit ? '#800000' : '#120000'} stroke={lit ? '#700000' : '#600000'} />
    {lit ? (
      <path d={`M${x - 2.500} ${y - 1}h5L${x} ${y + 2}Z`} fill="#ff2020" />
    ) : (
      <path d={`M${x} ${y - 6}v12M${x - 3} ${y - 2}h6L${x} ${y + 2}ZM${x - 3} ${y + 2.500}h6`} fill="none" stroke="#901010" />
    )}
    <T x={x + 10.500} y={y - 1} s={7.500} w={9}>{id}</T>
    <T x={x + 10.500} y={y + 6} s={5.500} w={w}>{kind}</T>
    <T x={x - 2} y={top + (net === 'check' ? 13 : 6)} s={5.500} w={net === 'check' ? 12 : 6} fill="#3a3a30" up>{net}</T>
    <T x={x - 2} y={bot - 3} s={5.500} w={5} fill="#3a3a30" up>gr</T>
  </g>
);

const outs = ['QA<B', 'QA<=B', 'QA=B', 'QA>=B', 'QA>B'];

const Comparator = ({ x, x2, y, ys, outRow, outX, net }: { x: number; x2: number; y: number; ys: number[]; outRow: number; outX: number; net: string }) => (
  <g>
    <rect x={x} y={y} width={x2 - x} height="81" fill={BODY} stroke={RED} shapeRendering="crispEdges" />
    {ys.map((py, i) => (
      <g key={py}>
        <L d={`M${x2} ${py}h11.500`} />
        <T x={x2 - 3} y={py + 2} s={5.500} w={i % 2 ? 16 : 13} end>{outs[i]}</T>
      </g>
    ))}
    <L d={`M${x2 + 12} ${ys[outRow]}H${outX}`} c={GRN} />
    <Dot x={outX} y={ys[outRow]} />
    <T x={outX - 3.500} y={ys[outRow] - 2} s={5.500} w={10}>{net}</T>
  </g>
);

const Schematic = () => {
  const step = 11.6;
  const vx = Array.from({ length: 102 }, (_, i) => 192 + i * step).filter((v) => v < 1361);
  const hy = Array.from({ length: 51 }, (_, i) => 112 + i * step).filter((v) => v < 699);
  const lowYs = [402.5, 408.5, 414.5, 419.5, 425.5];
  return (
    <svg width="1177" height="595" viewBox="184 105 1177 595" className="block">
      <rect x="184" y="105" width="1177" height="595" fill="#dfdfcf" />
      <g fill="#bcbcae" shapeRendering="crispEdges">
        {vx.map((v, i) => <rect key={v} x={Math.round(v) - (i % 50 ? 0 : 1)} y="105" width={i % 50 ? 1 : 2} height="594" />)}
        {hy.map((v, i) => <rect key={v} x="184" y={Math.round(v) - (i === 25 ? 1 : 0)} width="1176" height={i === 25 ? 2 : 1} />)}
      </g>

      <g stroke={NAVY} fill="none" shapeRendering="crispEdges">
        <rect x="337.500" y="112.500" width="870" height="580" />
        <rect x="349.500" y="124.500" width="846" height="556" />
        <path d="M349.500 112V124M1195.500 112V124M337 124.500H349M1195 124.500H1207M349.500 680V692M1195.500 680V692M337 680.500H349M1195 680.500H1207" />
        {[179.5, 235.5, 291.5, 346.5, 402.5, 458.5, 513.5, 569.5, 625.5].map((y) => <path key={y} d={`M337 ${y}H349M1195 ${y}H1207`} />)}
        {Array.from({ length: 9 }, (_, i) => Math.floor(433.6 + i * 84.7) + 0.5).map((x) => <path key={x} d={`M${x} 112V124M${x} 680V692`} />)}
      </g>
      {[...'ABCDEFGHJK'].map((c, i) => (
        <g key={c}>
          <T x={389.5 + i * 84.6} y={120} s={6} w={4.500} b fill={NAVY}>{c}</T>
          <T x={388.5 + i * 84.6} y={689} s={6} w={4.500} b fill={NAVY}>{c}</T>
        </g>
      ))}
      {[152, 208, 264, 319, 375, 431, 487, 542, 598, 654].map((y, i) => (
        <g key={y}>
          <T x={342} y={y + 2} s={6} w={3.300} b fill={NAVY}>{i}</T>
          <T x={1200} y={y + 2} s={6} w={3.300} b fill={NAVY}>{i}</T>
        </g>
      ))}

      <Comparator x={180.5} x2={212.5} y={132.5} ys={[138.5, 144.5, 150.5, 156.5, 161.5]} outRow={2} outX={233.5} net="out2" />
      <T x={184} y={219} w={22}>RATOR_4</T>
      <Comparator x={180.5} x2={212.5} y={254.5} ys={[260.5, 266.5, 272.5, 277.5, 283.5]} outRow={2} outX={233.5} net="out3" />
      <T x={184} y={341} w={22}>RATOR_4</T>
      <Comparator x={180.5} x2={198.5} y={396.5} ys={lowYs} outRow={4} outX={215.5} net="out2" />
      <T x={184} y={483} w={8}>R_4</T>
      <Comparator x={247.5} x2={294.5} y={396.5} ys={lowYs} outRow={4} outX={320.5} net="out3" />
      <T x={248} y={395} s={7.500} w={13}>U66</T>
      <T x={248} y={483} w={40}>COMPARATOR_4</T>
      {[[402.5, 'A0', 'c00'], [408.5, 'A1', 'c11'], [414.5, 'A2', 'c22'], [419.5, 'A3', 'c33'], [431.5, 'B0', ''], [437.5, 'B1', ''], [443.5, 'B2', ''], [448.5, 'B3', 'g0'], [460.5, 'A<B', 'gr'], [466.5, 'A=B', 'g0'], [472.5, 'A>B', 'gr']].map((r) => {
        const [y, a, n] = r as [number, string, string];
        return (
          <g key={y}>
            <L d={`M227.500 ${y}H236`} c={GRN} />
            <L d={`M236 ${y}H247`} />
            {n && <Dot x={227.5} y={y} />}
            <T x={250} y={y + 2} s={5.500} w={a.length === 2 ? 6.500 : 10}>{a}</T>
            {n && <T x={n.length === 3 ? 232 : 231} y={y - 1} s={5.500} w={n.length * 2.600}>{n}</T>}
          </g>
        );
      })}
      <L d="M227.500 431V444M218.500 437.500H228" c={GRN} />
      <Dot x={218.5} y={437.5} />
      <T x={221} y={435} s={5.500} w={5}>gr</T>

      {[[204.5, 532.5, 233.5, '4', 'load1'], [204.5, 585.5, 233.5, '5', 'load2'], [206.5, 643.5, 236.5, '76', 'load3']].map((r) => {
        const [x, y, ox, t, n] = r as [number, number, number, string, string];
        return (
          <g key={y}>
            <path d={`M180 ${y - 11.500}H${x - 17}Q${x - 6} ${y - 9} ${x} ${y}Q${x - 6} ${y + 9} ${x - 17} ${y + 11.500}H180Z`} fill={BODY} stroke={RED} />
            <L d={`M${x} ${y}h12`} />
            <L d={`M${x + 12} ${y}H${ox}`} c={GRN} />
            <Dot x={ox} y={y} />
            <T x={184} y={y - 13.500} s={6.500} w={t.length * 2.600}>{t}</T>
            <T x={230} y={y - 1.500} s={5.500} w={10}>{n}</T>
          </g>
        );
      })}

      {[[176.5, 'bt', 5], [199.5, 'reset', 12]].map((r) => {
        const [y, n, w] = r as [number, string, number];
        return (
          <g key={y}>
            <path d={`M380 ${y - 6.500}H390L395.500 ${y}L390 ${y + 6.500}H380Z`} fill="#0000b0" stroke="#000060" strokeWidth=".6" />
            <T x={384} y={y + 3.300} s={9} w={5} b fill="#c0c0c8">0</T>
            <circle cx="395.500" cy={y - 6} r="2.500" fill="#f00000" />
            <path d={`M394.500 ${y - 7}h2M395.500 ${y - 7}v2`} stroke="#600" strokeWidth=".6" />
            <L d={`M396 ${y}H408`} />
            <L d={`M408 ${y}H421`} c={GRN} />
            <Dot x={421.5} y={y} />
            <T x={415} y={y - 2} s={5.500} w={w}>{n}</T>
          </g>
        );
      })}

      <Led x={517.5} y={156.5} top={138.5} bot={176.5} id="D2" kind="LED-RED" w={22} lit net="p1" />
      <Led x={598.5} y={303.5} top={274.5} bot={330.5} id="D1" kind="LED-YELLOW" w={33} net="check" />
      <Led x={1056.5} y={158.5} top={138.5} bot={179.5} id="D3" kind="LED-RED" w={22} net="p2" />

      <T x={468} y={197} s={16} w={105} fill={RED}>Player 1 score:</T>
      <T x={466} y={315} s={16} w={96.500} fill={RED}>Player 1 time:</T>
      <T x={1004} y={199} s={16} w={105} fill={RED}>Player 2 score:</T>
      <T x={1008} y={315} s={16} w={96.500} fill={RED}>Player 2 time:</T>

      <Displays />
      {[[0, 184.5], [3, 283.5], [0, 379.5]].map(([dx, y], r) =>
        [690.5, 780.5, 873.5].map((x, c) => <Switch key={r + '-' + c} x={x + dx} y={y} n={r * 3 + c} />)
      )}

      <L d="M963.500 390V409" c={GRN} />
      <L d="M963.500 409V421" />
      <Dot x={963.5} y={390.5} />
      <path d="M958 434.500V424.500L963.500 420L969.500 424.500V434.500Z" fill="#0000b0" stroke="#000060" strokeWidth=".6" />
      <T x={967} y={431} s={9} w={5} b fill="#c0c0c8" up>0</T>
      <circle cx="958.500" cy="419.500" r="2.500" fill="#f00000" />
      <T x={962} y={400} s={5.500} w={9} fill="#3a3a30" up>chup</T>

      <L d="M1242.500 263.500H1255M1242.500 274.500H1255M1315 269.500H1361" c={GRN} />
      <path d="M1268 257.500H1285Q1297 258 1303.500 269.500Q1297 280 1285 280.500H1268Q1279 269 1268 257.500Z" fill={BODY} stroke={RED} />
      <L d="M1255 263.500H1273M1255 274.500H1273M1303 269.500H1315" />
      <Dot x={1242.5} y={263.5} />
      <Dot x={1242.5} y={274.5} />
      <T x={1268} y={256} s={7.500} w={17}>U992</T>
      <T x={1267.500} y={286} s={6} w={8}>OR</T>
      <T x={1249} y={261} s={5.500} w={4}>bt</T>
      <T x={1246} y={273} s={5.500} w={11}>reset</T>

      <path d="M1336 414.500H1353Q1358 415 1362 417V436Q1358 437 1353 437.500H1336Q1344 426 1336 414.500Z" fill={BODY} stroke={RED} />
      {[396.5, 402.5, 408.5, 414.5, 419.5, 431.5, 437.5, 443.5, 448.5, 454.5].map((y, i) => (
        <g key={y}>
          <L d={`M1308.500 ${y}H1323`} c={GRN} />
          <L d={`M1323 ${y}H${i === 4 || i === 5 ? 1340 : 1336}`} />
          <Dot x={1308.5} y={y} />
          <T x={i === 5 ? 1311 : [0, 4].includes(i) ? 1312 : i === 6 || i === 7 ? 1318 : 1315} y={y - 1} s={5.500} w={i === 5 ? 5 : 10}>
            {i === 5 ? 'gr' : 'key' + (i < 5 ? i : i - 1)}
          </T>
        </g>
      ))}
      <L d="M1335.500 396V415M1335.500 437V455" />
      <T x={1335} y={395} s={7.500} w={17}>U595</T>
      <T x={1335} y={460} s={6} w={15}>OR_10</T>

      <rect x="992.500" y="632.500" width="203" height="48" fill="#fff" stroke={NAVY} shapeRendering="crispEdges" />
      <L d="M1139.500 632V680" c={NAVY} />
      <T x={995} y={640} s={6} w={29} b fill={NAVY}>FILE NAME:</T>
      <T x={1031.500} y={641} s={8.500} w={74} b fill={NAVY}>final edition.pdsprj</T>
      <T x={994.500} y={653.500} s={6} w={35.500} b fill={NAVY}>DESIGN TITLE:</T>
      <T x={1031.500} y={655} s={8.500} w={74} b fill={NAVY}>final edition.pdsprj</T>
      <T x={995} y={665} s={6} w={15} b fill={NAVY}>PATH:</T>
      <T x={1031.500} y={666} s={6} w={118} b fill={NAVY}>C:\Users\mr\Downloads\final edition.pdsprj</T>
      <T x={995} y={676} s={6} w={9} b fill={NAVY}>BY:</T>
      <T x={1008} y={676} s={6} w={27} b fill={NAVY}>@AUTHOR</T>
      <T x={1100.500} y={676} s={6} w={11} b fill={NAVY}>REV:</T>
      <T x={1112.500} y={677} s={6} w={17} b fill={NAVY}>@REV</T>
      <T x={1142} y={639} s={6} w={15} b fill={NAVY}>DATE:</T>
      <T x={1142} y={650} s={8.500} w={41} b fill={NAVY}>09/11/1397</T>
      <T x={1144} y={660} s={6} w={15} b fill={NAVY}>PAGE:</T>
      <T x={1143} y={668} s={6} w={3} b fill={NAVY}>1</T>
      <T x={1153} y={668} s={6} w={5.500} b fill={NAVY}>of</T>
      <T x={1163} y={668} s={6} w={7} b fill={NAVY}>76</T>
      <T x={1142} y={676} s={6} w={35} b fill={NAVY}>TIME: 05:00:34</T>
      <T x={1179} y={676} s={5.500} w={8} b fill={NAVY}>ب.ظ</T>
    </svg>
  );
};

/* ---------- window frame ---------- */

const menu: [string, string][] = [
  ['File', 'w-[32px]'], ['Edit', 'w-[34px]'], ['View', 'w-[39px]'], ['Tool', 'w-[36px]'], ['Design', 'w-[50px]'], ['Graph', 'w-[46px]'],
  ['Debug', 'w-[49px]'], ['Library', 'w-[50px]'], ['Template', 'w-[62px]'], ['System', 'w-[52px]'], ['Help', 'w-[40px]'],
];

const TitleBar = () => (
  <div className="flex h-[24px] items-center bg-white pl-[2px]">
    <svg width="16" height="16" viewBox="0 0 16 16" fill="none">
      <path d="M1 2L15 14M15 1L2 15" stroke="#c8a868" strokeWidth="1.500" />
      <circle cx="8" cy="8" r="4.800" fill="#304c78" />
      <circle cx="7" cy="6.500" r="1.800" fill="#7898c8" />
      {[[2, 2], [14, 2], [2, 14], [14, 14]].map(([x, y]) => <circle key={x + '' + y} cx={x} cy={y} r="1.400" fill="#eee0b8" stroke="#b09860" strokeWidth=".6" />)}
    </svg>
    <span className="ml-[5px] grow text-[12px] tracking-[-0.28px] text-black">final edition - Proteus 8 Professional - Schematic Capture</span>
    <svg width="130" height="22" viewBox="0 0 130 22" fill="none" stroke="#111" shapeRendering="crispEdges">
      <path d="M9 9.500H19" />
      <path d="M54.500 7.500H61.500V14.500H54.500ZM56.500 7V5.500H63.500V12.500H62" />
      <path d="M100 5L110 15M110 5L100 15" shapeRendering="auto" />
    </svg>
  </div>
);

const TabBar = () => (
  <div className="flex h-[32px] flex-col bg-[#e3eaf1]">
    <div className="flex h-[26px] border-b border-[#6da3c2]">
      <div className="relative -mb-px flex h-[26px] w-[179px] items-center pl-[20px]">
        <svg className="absolute inset-0" width="179" height="26" viewBox="0 0 179 26">
          <defs>
            <linearGradient id="tab" x1="0" y1="0" x2="0" y2="1">
              <stop offset="0" stopColor="#eaf5fc" />
              <stop offset="1" stopColor="#b8dbee" />
            </linearGradient>
          </defs>
          <path d="M0 26V23L20.500 1.500H178.500V26" fill="url(#tab)" />
          <path d="M0 23L20.500 1.500H178.500V26" fill="none" stroke="#6da3c2" />
        </svg>
        <span className="relative flex items-center">
          <svg width="16" height="16" viewBox="0 0 18 18" fill="none" className="mr-[3px] shrink-0"><Parts /></svg>
          <span className="w-[115px] text-[13px] leading-[18px] font-bold tracking-[-0.6px] whitespace-nowrap text-[#214a6b]">Schematic Capture</span>
          <svg width="13" height="13" viewBox="0 0 13 13" className="shrink-0"><path d="M1 1L12 12M12 1L1 12" stroke="#6c7074" strokeWidth="2" /></svg>
        </span>
      </div>
    </div>
    <div className="h-[6px] bg-linear-to-b from-[#c3e0ef] to-[#a9cfe4]" />
  </div>
);

const barBg = 'flex h-full items-center border-r border-[#a8cce0] bg-linear-to-b from-[#ebf5fb] via-[#d7eaf4] to-[#b0d4ea] ';

const StatusBar = () => (
  <div className="flex h-[24px] gap-[4px] bg-[#e2eaf1] font-['Open_Sans',sans-serif] text-[11.5px]">
    <div className={barBg + 'w-[259px]'}>
      <Grip />
      <svg width="153" height="22" viewBox="11 0 153 22" className="shrink-0">
        <path d="M25 5L33 11.500L25 18Z M60 5H62.500V18H60ZM64 5L72 11.500L64 18ZM97 5H100V18H97ZM102 5H105V18H102ZM131 5H144V18H131Z" fill="#0864d0" stroke="#0450a8" strokeWidth=".6" />
        <path d="M158.500 3V19" stroke="#a8a8a8" />
        <path d="M159.500 3V19" stroke="#fff" />
      </svg>
      <svg width="26" height="16" viewBox="0 0 26 16" className="shrink-0">
        <circle cx="13.500" cy="8" r="6.500" fill="#4a4a4a" />
        <path d="M13.500 3V5.500M12 7H14V12M11.500 12.500H15.500" stroke="#fff" strokeWidth="1.700" fill="none" />
      </svg>
      <span className="tracking-[-0.6px] whitespace-nowrap text-[#8a949b]">No Messages</span>
    </div>
    <div className={barBg + 'w-[412px]'}>
      <Grip />
      <span className="ml-px tracking-[-0.32px] whitespace-nowrap text-black">COMPONENT SW10, Value=SW-SPDT-MOM, Module=&lt;NONE&gt;. Device=SW-SPD</span>
    </div>
    <div className={barBg + 'grow text-[#111]'}>
      <Grip />
      <span className="ml-[2px] w-[23px]">x:</span>
      <span className="w-[46px] tracking-[-0.4px]">+1800.0</span>
      <span className="w-[30px]">y:</span>
      <span className="grow tracking-[-0.4px]">+200.0</span>
      <span className="mr-px text-[#000090]">th</span>
    </div>
  </div>
);

export default function App() {
  return (
    <div className="flex h-[727px] w-[1366px] flex-col overflow-hidden bg-[#e1e9f0] font-['Liberation_Sans',sans-serif]">
      <div className="font-['Open_Sans',sans-serif]">
        <TitleBar />
        <div className="flex h-[17px] items-center bg-white pl-[7px] text-[12px] leading-[17px] tracking-[-0.35px] text-black">
          {menu.map(([m, w]) => <span key={m} className={w}>{m}</span>)}
        </div>
      </div>
      <MainBars />
      <TabBar />
      <div className="flex h-[599px] shrink-0 bg-[#e1e9f0]">
        <SideTools />
        <div className="ml-[2px] flex w-[28px]">
          <RotateTools />
        </div>
        <div className="flex w-[121px] flex-col gap-[4px]">
          <Overview />
          <DevicePanel />
        </div>
        <div className="w-[4px] bg-[#a9cce0]" />
        <div className="h-[597px] w-[1179px] border border-[#606060]">
          <Schematic />
        </div>
        <div className="grow bg-[#a9cce0]" />
      </div>
      <StatusBar />
    </div>
  );
}
